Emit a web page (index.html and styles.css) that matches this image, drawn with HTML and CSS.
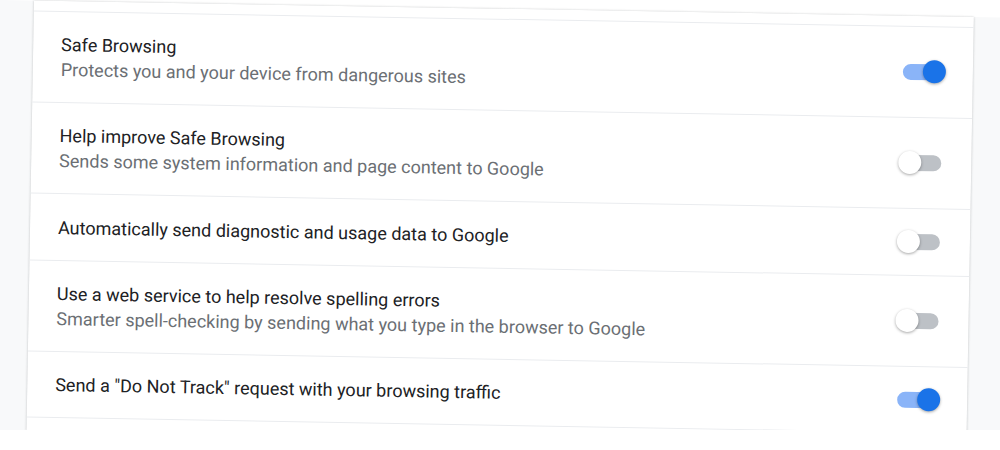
FILE: index.html
```html
<!DOCTYPE html>
<html lang="en">
<head>
    <meta charset="UTF-8">
    <meta name="viewport" content="width=device-width, initial-scale=1.0">
    <title>Privacy and security</title>
    <link rel="stylesheet" href="styles.css">
</head>
<body>
    <div class="page">
        <div class="card">
            <div class="row two-line">
                <div class="text">
                    <div class="label">Safe Browsing</div>
                    <div class="sub">Protects you and your device from dangerous sites</div>
                </div>
                <div class="toggle on"><span class="knob"></span></div>
            </div>
            <div class="row two-line">
                <div class="text">
                    <div class="label">Help improve Safe Browsing</div>
                    <div class="sub">Sends some system information and page content to Google</div>
                </div>
                <div class="toggle"><span class="knob"></span></div>
            </div>
            <div class="row">
                <div class="text">
                    <div class="label">Automatically send diagnostic and usage data to Google</div>
                </div>
                <div class="toggle"><span class="knob"></span></div>
            </div>
            <div class="row two-line">
                <div class="text">
                    <div class="label">Use a web service to help resolve spelling errors</div>
                    <div class="sub">Smarter spell-checking by sending what you type in the browser to Google</div>
                </div>
                <div class="toggle"><span class="knob"></span></div>
            </div>
            <div class="row last">
                <div class="text">
                    <div class="label">Send a "Do Not Track" request with your browsing traffic</div>
                </div>
                <div class="toggle on"><span class="knob"></span></div>
            </div>
        </div>
    </div>
</body>
</html>
```

FILE: styles.css
```css
body {
    margin: 0;
    background-color: #ffffff;
    font-family: Roboto, "Liberation Sans", Arial, sans-serif;
    overflow: hidden;
}

/* the screenshot is a slightly tilted photo of the settings page */
.page {
    width: 1020px;
    height: 430px;
    padding-left: 34px;
    box-sizing: border-box;
    background-color: #f8f9fa;
    transform: rotate(1deg);
    transform-origin: 0 0;
}

.card {
    width: 940px;
    height: 100%;
    padding-top: 10px;
    box-sizing: border-box;
    background-color: #ffffff;
    box-shadow: 0 0 2px rgba(60, 64, 67, 0.25), 0 1px 3px rgba(60, 64, 67, 0.1);
}

.row {
    display: flex;
    align-items: center;
    justify-content: space-between;
    height: 67px;
    padding: 0 27px 0 28px;
    box-sizing: border-box;
    border-top: 1px solid #eaecef;
}

.row.two-line {
    height: 91px;
}

.row.last {
    border-bottom: 1px solid #eaecef;
}

.label {
    font-size: 18px;
    line-height: 25px;
    color: #202124;
}

.sub {
    font-size: 18px;
    line-height: 25px;
    color: #6b6f74;
}

.toggle {
    position: relative;
    width: 40px;
    height: 16px;
    margin: 0 3px;
    border-radius: 8px;
    background-color: #bdc1c6;
}

.knob {
    position: absolute;
    top: -4px;
    left: -3px;
    width: 23px;
    height: 23px;
    border-radius: 50%;
    background-color: #ffffff;
    box-shadow: 0 1px 3px rgba(0, 0, 0, 0.35);
}

.toggle.on {
    background-color: #8ab4f8;
}

.toggle.on .knob {
    left: auto;
    right: -3px;
    background-color: #1a73e8;
}
```
